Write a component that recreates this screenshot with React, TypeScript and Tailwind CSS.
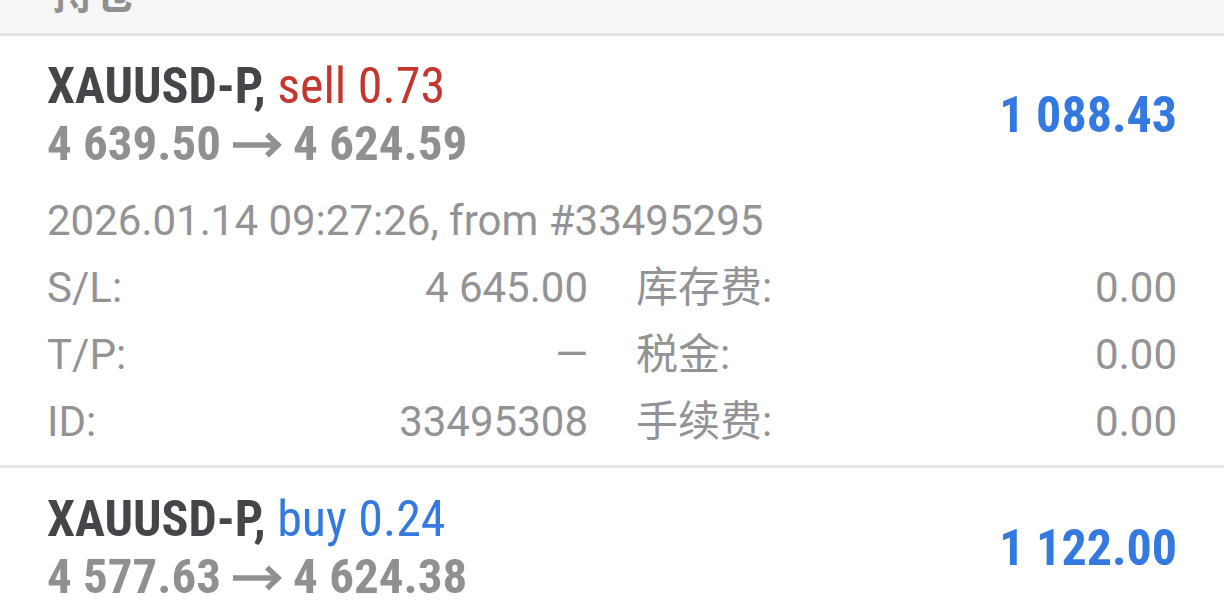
import React from "react";

type Position = {
  symbol: string;
  side: "sell" | "buy";
  volume: string;
  openPrice: string;
  currentPrice: string;
  profit: string;
  time?: string;
  from?: string;
  sl?: string;
  tp?: string;
  id?: string;
  swap?: string;
  tax?: string;
  fee?: string;
};

const positions: Position[] = [
  {
    symbol: "XAUUSD-P",
    side: "sell",
    volume: "0.73",
    openPrice: "4 639.50",
    currentPrice: "4 624.59",
    profit: "1 088.43",
    time: "2026.01.14 09:27:26",
    from: "33495295",
    sl: "4 645.00",
    tp: "—",
    id: "33495308",
    swap: "0.00",
    tax: "0.00",
    fee: "0.00",
  },
  {
    symbol: "XAUUSD-P",
    side: "buy",
    volume: "0.24",
    openPrice: "4 577.63",
    currentPrice: "4 624.38",
    profit: "1 122.00",
  },
];

const condensed =
  "font-['Roboto_Condensed','Liberation_Sans_Narrow',Roboto,sans-serif] font-stretch-condensed";

export default function App() {
  return (
    <div className="h-[606px] w-[1224px] overflow-hidden bg-white font-[Roboto,'Noto_Sans_CJK_SC',sans-serif]">
      <div className="h-[36px] overflow-hidden border-b-[3px] border-[#e4e4e4] bg-[#f6f6f6]">
        <p className="-mt-[30px] pl-[52px] font-['Noto_Sans_CJK_SC',sans-serif] text-[42px] font-bold leading-[42px] text-[#909090]">
          持仓
        </p>
      </div>

      {positions.map((p, i) => (
        <PositionRow key={i} position={p} last={i === positions.length - 1} />
      ))}
    </div>
  );
}

function PositionRow({ position, last }: { position: Position; last: boolean }) {
  const sideColor = position.side === "sell" ? "text-[#c4372e]" : "text-[#3479e0]";

  return (
    <div className={last ? "px-[47px] pt-[23px]" : "border-b-[3px] border-[#e8e8e8] px-[47px] pt-[22px] pb-[10px]"}>
      <div className="flex items-center justify-between">
        <div className={`${condensed} text-[49px] leading-[57px]`}>
          <p className="text-[50px] font-bold text-[#45454a]">
            {position.symbol},{" "}
            <span className={`font-normal ${sideColor}`}>
              {position.side} {position.volume}
            </span>
          </p>
          <p className="flex items-center font-bold text-[#909093]">
            <span>{position.openPrice}</span>
            <ArrowIcon />
            <span>{position.currentPrice}</span>
          </p>
        </div>
        <div className={`${condensed} text-[50px] font-bold text-[#3479e0]`}>
          {position.profit}
        </div>
      </div>

      {position.time && (
        <div className="mt-[23px] text-[42px] text-[#939396]">
          <p className="leading-[52px]">
            {position.time}, from #{position.from}
          </p>
          <div className="mt-[7px] grid grid-cols-2 gap-x-[48px] leading-[67px]">
            <Detail label="S/L:" value={position.sl} />
            <Detail label="库存费:" value={position.swap} />
            <Detail label="T/P:" value={position.tp} />
            <Detail label="税金:" value={position.tax} />
            <Detail label="ID:" value={position.id} />
            <Detail label="手续费:" value={position.fee} />
          </div>
        </div>
      )}
    </div>
  );
}

function ArrowIcon() {
  return (
    <svg width="50" height="26" viewBox="0 0 50 26" className="mx-[11px] mt-[2px] shrink-0">
      <path d="M1 13H45" stroke="#909093" strokeWidth="5.5" fill="none" />
      <path d="M35 2.5L46 13L35 23.5" stroke="#909093" strokeWidth="5.5" fill="none" />
    </svg>
  );
}

function Detail({ label, value }: { label: string; value?: string }) {
  return (
    <div className="flex justify-between">
      <span>{label}</span>
      <span>{value}</span>
    </div>
  );
}
